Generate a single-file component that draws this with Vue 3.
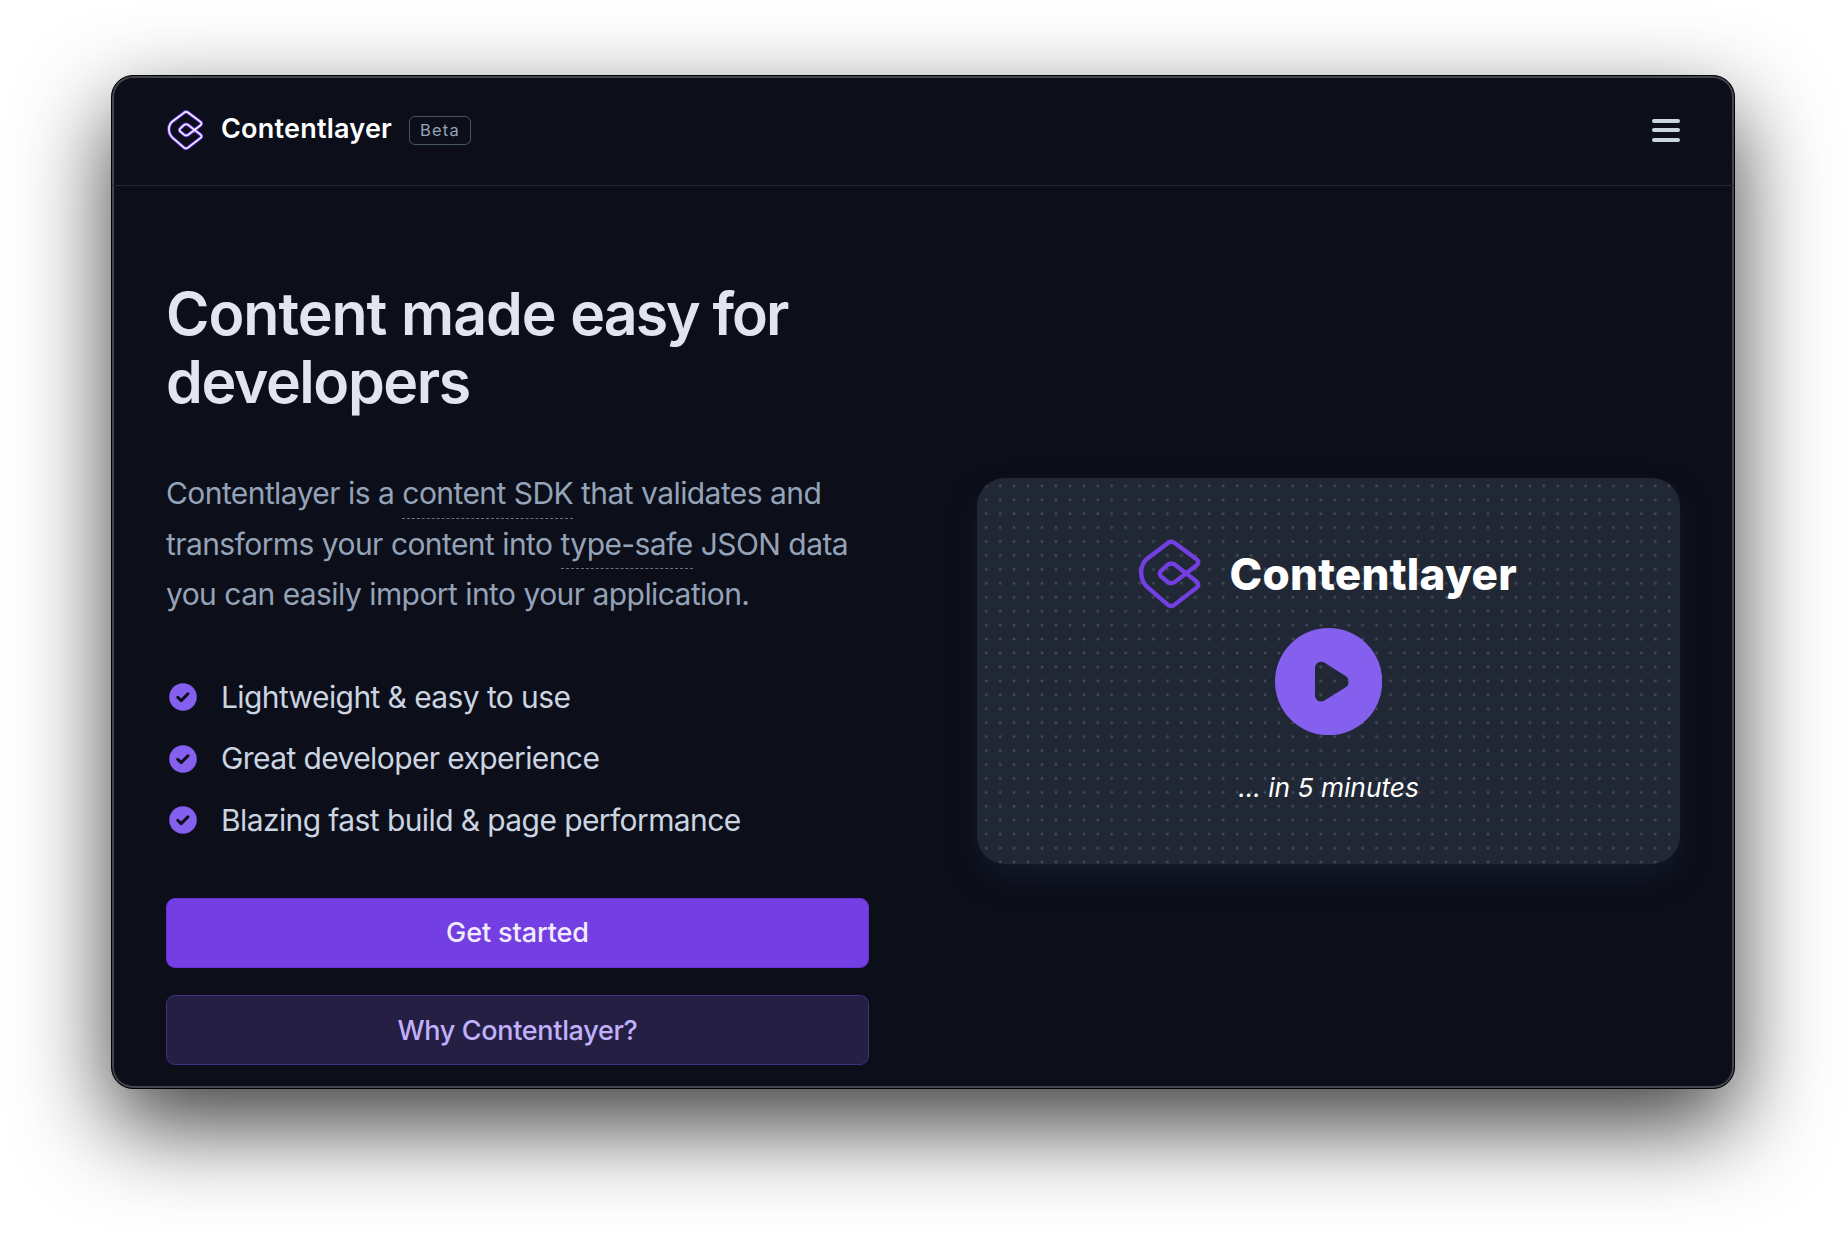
<script setup>
const features = [
  'Lightweight & easy to use',
  'Great developer experience',
  'Blazing fast build & page performance',
]
const logoPath =
  'M35 64 L96 18 Q106 11 116 18 L182 67 Q192 76 182 85 L118 134 Q106 143 94 134 L76 119 Q66 110 76 101 L94 84 Q106 75 118 84 L182 134 Q192 143 182 152 L116 203 Q105 211 95 203 L35 151 C9 128 9 84 35 64 Z'
</script>

<template>
  <div class="stage">
    <div class="window">
      <header class="topbar">
        <svg class="logo-small" viewBox="0 0 200 220" fill="none" stroke-linejoin="round">
          <path :d="logoPath" stroke="#6d3be0" stroke-width="18" />
          <path :d="logoPath" stroke="#f3efff" stroke-width="8.5" />
        </svg>
        <span class="brand">Contentlayer</span>
        <span class="badge">Beta</span>
        <button class="menu" aria-label="Menu"><i></i><i></i><i></i></button>
      </header>
      <main class="hero">
        <section class="copy">
          <h1><span class="wide">Content made </span><span class="tight">easy for</span><br />developers</h1>
          <p class="lead">
            Contentlayer is a <span class="term">content SDK</span> that validates and<br />
            transforms your content into <span class="term">type-safe</span> JSON data<br />
            you can easily import into your application.
          </p>
          <ul class="features">
            <li v-for="item in features" :key="item">
              <svg viewBox="0 0 28 28">
                <circle cx="14" cy="14" r="13.8" fill="#855fee" />
                <path d="M8.8 14.4 L12.2 17.6 L19 10.8" fill="none" stroke="#0c0e19" stroke-width="3" stroke-linecap="round" stroke-linejoin="round" />
              </svg>
              <span>{{ item }}</span>
            </li>
          </ul>
          <a class="btn primary">Get started</a>
          <a class="btn secondary">Why Contentlayer?</a>
        </section>
        <section class="video">
          <div class="video-brand">
            <svg class="logo-big" viewBox="0 0 200 220" fill="none" stroke-linejoin="round">
              <path :d="logoPath" stroke="#743fe2" stroke-width="13" />
            </svg>
            <span>Contentlayer</span>
          </div>
          <svg class="play" viewBox="0 0 322 322">
            <path fill="#855fee" fill-rule="evenodd" d="M161 0 A161 161 0 1 1 161 322 A161 161 0 1 1 161 0 Z M120 122 C120 106 135 96 150 105 L212 144 C224 152 224 170 212 178 L150 217 C135 227 120 216 120 201 Z" />
          </svg>
          <div class="caption">... in 5 minutes</div>
        </section>
      </main>
    </div>
  </div>
</template>

<style>
body {
  margin: 0;
  background: #fff;
}
</style>

<style scoped>
* {
  box-sizing: border-box;
}
.stage {
  width: 1846px;
  height: 1236px;
  padding: 75px 111px;
  overflow: hidden;
  background: #fff;
  font-family: Inter, 'Liberation Sans', sans-serif;
}
.window {
  width: 1624px;
  height: 1014px;
  border: 1px solid #000;
  border-radius: 22px;
  overflow: hidden;
  background: #0c0e19;
  box-shadow: inset 0 0 0 2px #43464c, 0 36px 92px rgba(0, 0, 0, 0.76);
}
.topbar {
  display: flex;
  align-items: flex-start;
  height: 110px;
  padding: 0 54px;
  border-bottom: 1px solid #232733;
}
.logo-small {
  width: 38px;
  height: 42px;
  margin: 33px 0 0 -0.5px;
}
.brand {
  margin: 37px 0 0 17.5px;
  font-size: 27px;
  line-height: 32px;
  font-weight: 600;
  letter-spacing: 0.22px;
  color: #fff;
}
.badge {
  width: 62px;
  height: 29px;
  margin: 40px 0 0 17px;
  border: 1px solid #475569;
  border-radius: 6px;
  font-size: 16.5px;
  line-height: 27px;
  letter-spacing: 1.2px;
  text-align: center;
  color: #94a3b8;
}
.menu {
  display: flex;
  flex-direction: column;
  gap: 5.6px;
  width: 28px;
  margin: 42.5px 0 0 auto;
  padding: 0;
  border: 0;
  background: none;
}
.menu i {
  height: 4px;
  border-radius: 2px;
  background: #cbd5e1;
}
.hero {
  display: flex;
  gap: 108px;
  padding: 0 54px;
}
.copy {
  width: 703px;
}
h1 {
  margin: 94px 0 0;
  font-size: 59px;
  line-height: 68px;
  font-weight: 600;
  letter-spacing: -1.42px;
  word-spacing: 0.8px;
  white-space: nowrap;
  color: #e2e5ef;
}
.wide {
  letter-spacing: -1.02px;
}
.tight {
  letter-spacing: -2px;
}
.lead {
  margin: 52px 0 0;
  font-size: 30px;
  line-height: 50.5px;
  letter-spacing: -0.58px;
  word-spacing: 0.2px;
  white-space: nowrap;
  color: #94a3b8;
}
.term {
  padding-bottom: 6.5px;
  border-bottom: 1px dashed #6b7487;
}
.features {
  display: flex;
  flex-direction: column;
  margin: 47.3px 0 0;
  padding: 0;
  list-style: none;
  font-size: 30px;
  line-height: 61.3px;
  letter-spacing: -0.6px;
  white-space: nowrap;
  color: #cbd5e1;
}
.features li {
  display: flex;
  align-items: center;
  height: 61.5px;
}
.features svg {
  width: 28px;
  height: 28px;
  margin: -1px 24px 0 3px;
}
.btn {
  display: flex;
  align-items: center;
  justify-content: center;
  height: 70px;
  border-radius: 9px;
  font-size: 27px;
  font-weight: 500;
}
.primary {
  margin-top: 46.7px;
  padding-bottom: 1px;
  border: 1px solid #6730d4;
  background: #743fe2;
  color: #f1ecfe;
  letter-spacing: -0.1px;
}
.secondary {
  margin-top: 27px;
  padding-top: 1px;
  border: 1px solid #41307f;
  background: #251f44;
  color: #c1b0fb;
  letter-spacing: -0.33px;
}
.video {
  display: flex;
  flex-direction: column;
  align-items: center;
  width: 703px;
  height: 386px;
  margin-top: 292px;
  border-radius: 28px;
  background-color: #212835;
  background-image: radial-gradient(circle at center, #444a57 1.1px, transparent 1.8px);
  background-size: 13.95px 13.95px;
  background-position: 2.3px 0.8px;
  box-shadow: 0 14px 30px -4px rgba(26, 42, 66, 0.5);
}
.video-brand {
  display: flex;
  align-items: flex-start;
  width: 386px;
  height: 129px;
  padding-top: 58.7px;
}
.logo-big {
  flex: none;
  width: 66.7px;
  height: 73.3px;
}
.video-brand span {
  margin: 10.3px 0 0 27.3px;
  font-size: 44px;
  line-height: 54px;
  font-weight: 800;
  letter-spacing: 0.25px;
  color: #fff;
}
.play {
  flex: none;
  width: 107.3px;
  height: 107.3px;
  margin-top: 21px;
}
.caption {
  margin-top: 36px;
  font-size: 26.3px;
  line-height: 34px;
  font-style: italic;
  color: #fff;
}
</style>
